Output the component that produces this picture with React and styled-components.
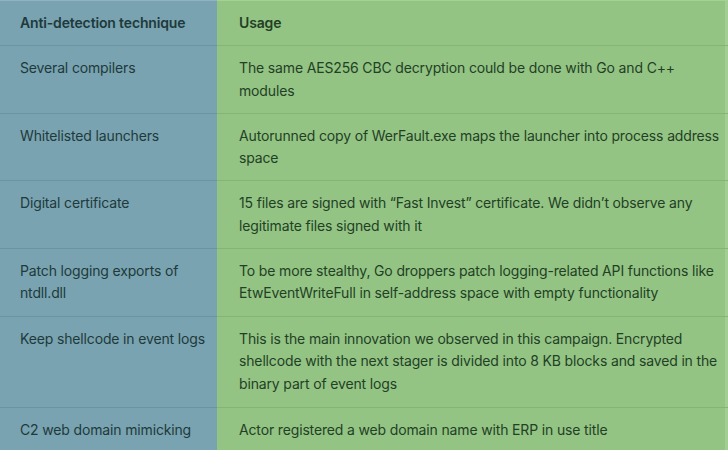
import React from 'react'
import styled, { createGlobalStyle } from 'styled-components'

const GlobalStyle = createGlobalStyle`
  html, body {
    margin: 0;
    padding: 0;
    background: #93c483;
  }
  body {
    font-family: Inter, "Noto Sans", sans-serif;
  }
`

const Table = styled.div`
  width: 728px;
  height: 450px;
  overflow: hidden;
  display: grid;
  grid-template-columns: 217px 1fr;
  align-content: start;
`

const Cell = styled.div`
  padding: ${p => (p.$head ? '11px' : '11px')} ${p => (p.$left ? '0' : '4px')} ${p => (p.$head ? '11px' : '11px')} ${p => (p.$left ? '20px' : '22px')};
  background: ${p => (p.$left ? '#79a3b0' : '#93c483')};
  border-bottom: 1px solid ${p => (p.$left ? '#6c93a0' : '#84b476')};
  border-top: ${p => (p.$head ? `1px solid ${p.$left ? '#8fb4bf' : '#a6d196'}` : 'none')};
  box-shadow: ${p => (p.$left ? 'none' : 'inset -3px 0 0 #a2cd93')};
  color: ${p => (p.$left ? '#1e3a3c' : '#233f26')};
  font-size: 14px;
  line-height: ${p => (p.$tall ? '22.8px' : '22.3px')};
  font-weight: ${p => (p.$head ? 600 : 400)};
  letter-spacing: -0.15px;
`

const rows = [
  ['Several compilers', 'The same AES256 CBC decryption could be done with Go and C++ modules'],
  ['Whitelisted launchers', 'Autorunned copy of WerFault.exe maps the launcher into process address space'],
  ['Digital certificate', '15 files are signed with \u201cFast Invest\u201d certificate. We didn\u2019t observe any legitimate files signed with it'],
  ['Patch logging exports of ntdll.dll', 'To be more stealthy, Go droppers patch logging-related API functions like EtwEventWriteFull in self-address space with empty functionality'],
  ['Keep shellcode in event logs', 'This is the main innovation we observed in this campaign. Encrypted shellcode with the next stager is divided into 8 KB blocks and saved in the binary part of event logs', true],
  ['C2 web domain mimicking', 'Actor registered a web domain name with ERP in use title'],
]

export default function App () {
  return (
    <>
      <GlobalStyle />
      <Table>
        <Cell $left $head>Anti-detection technique</Cell>
        <Cell $head>Usage</Cell>
        {rows.map(([tech, usage, tall], idx) => (
          <React.Fragment key={idx}>
            <Cell $left $tall={tall}>{tech}</Cell>
            <Cell $tall={tall}>{usage}</Cell>
          </React.Fragment>
        ))}
      </Table>
    </>
  )
}
